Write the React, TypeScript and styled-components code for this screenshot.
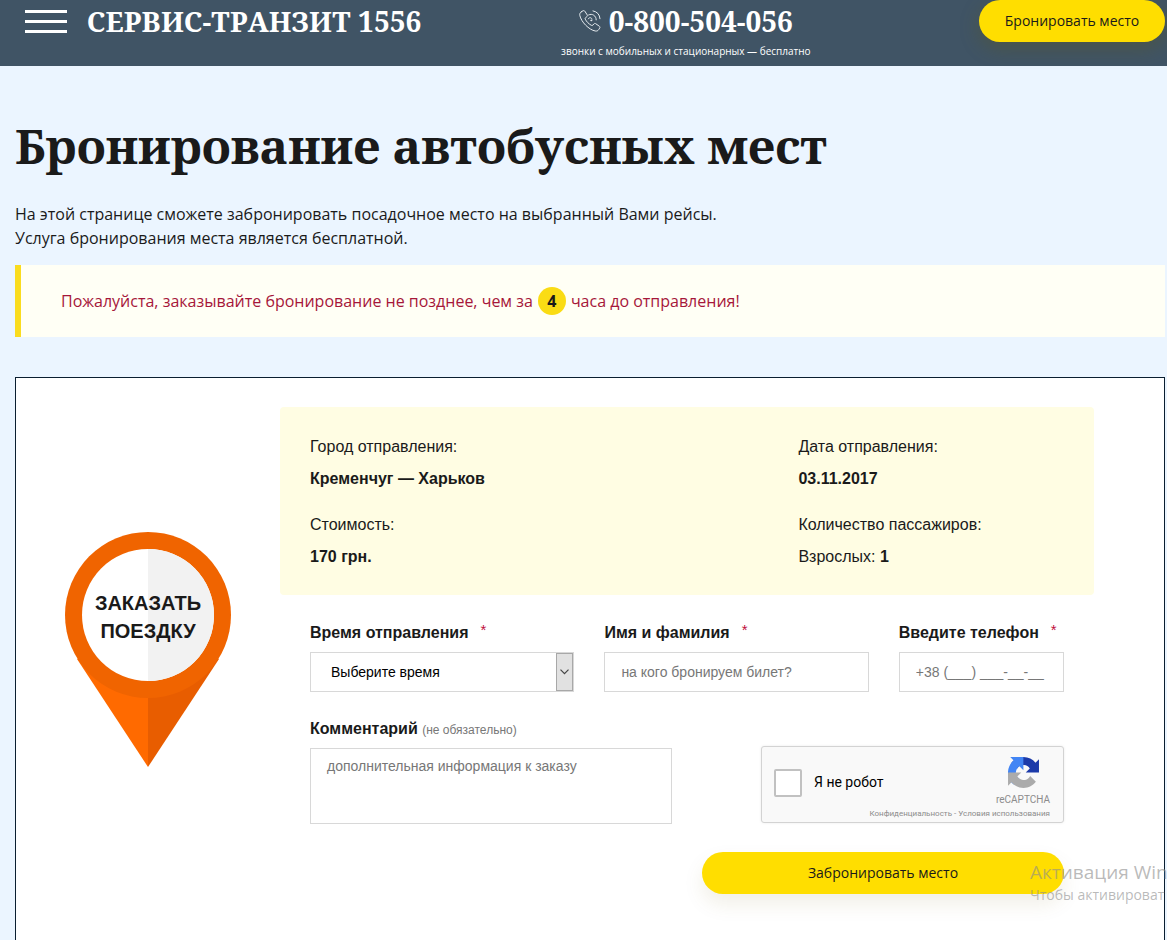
import React from 'react';
import styled, { createGlobalStyle } from 'styled-components';

const serif = `'Noto Serif', 'DejaVu Serif Condensed', 'DejaVu Serif', serif`;
const sans = `'Open Sans', 'Noto Sans', sans-serif`;
const arial = `'Liberation Sans', Arial, sans-serif`;

const GlobalStyle = createGlobalStyle`
  *, *::before, *::after { box-sizing: border-box; }
  body {
    margin: 0;
    background: #ebf5ff;
    color: #1a1a1a;
    font-family: ${sans};
    font-size: 16px;
    line-height: 24px;
  }
`;

const Page = styled.div`
  display: flex;
  flex-direction: column;
  min-height: 100vh;
`;

const Header = styled.header`
  display: grid;
  grid-template-columns: 5fr 4fr 3fr;
  height: 66px;
  padding: 0 2px 0 15px;
  background: #405465;
  color: #fff;
`;

const Brand = styled.div`
  display: flex;
  align-items: flex-start;
  gap: 20px;
  padding-left: 10px;
`;

const MenuButton = styled.button`
  display: flex;
  flex-direction: column;
  gap: 7px;
  width: 42px;
  margin: 10px 0 0;
  padding: 0;
  border: 0;
  background: none;
  cursor: pointer;
`;

const MenuBar = styled.span`
  height: 3px;
  width: 100%;
  background: #fff;
`;

const BrandName = styled.a`
  font: 700 28px/42px ${serif};
  color: #fff;
  text-decoration: none;
  white-space: nowrap;
`;

const Contact = styled.div`
  display: flex;
  flex-direction: column;
  align-items: center;
`;

const Phone = styled.a`
  display: flex;
  align-items: center;
  gap: 8px;
  font: 700 28px/42px ${serif};
  color: #fff;
  text-decoration: none;
  white-space: nowrap;
`;

const PhoneNote = styled.span`
  font-size: 10px;
  line-height: 18px;
  white-space: nowrap;
`;

const PillButton = styled.button<{ $width: number; $shadow?: boolean }>`
  width: ${(p) => p.$width}px;
  height: 42px;
  padding: 0;
  border: 0;
  border-radius: 21px;
  background: #ffde00;
  box-shadow: ${(p) => (p.$shadow ? '0 10px 20px rgba(120, 100, 20, 0.1)' : '0 6px 20px rgba(100, 90, 0, 0.3)')};
  color: #1a1a1a;
  font: 400 14px/42px ${sans};
  cursor: pointer;
`;

const HeaderAction = styled.div`
  display: flex;
  justify-content: flex-end;
`;

const Main = styled.main`
  display: flex;
  flex: 1;
  flex-direction: column;
  padding: 45px 2px 0 15px;
`;

const Title = styled.h1`
  margin: 0 0 21px;
  font: 700 48px/70px ${serif};
`;

const Intro = styled.p`
  margin: 0 0 15px;
`;

const Notice = styled.p`
  display: flex;
  align-items: center;
  gap: 5px;
  min-height: 72px;
  margin: 0 0 40px;
  padding: 0 40px;
  border-left: 6px solid #fadc1e;
  background: #fffff5;
  color: #a6173a;
`;

const Hours = styled.strong`
  width: 28px;
  height: 28px;
  border-radius: 50%;
  background: #fadc14;
  color: #1a1a1a;
  line-height: 28px;
  text-align: center;
`;

const Card = styled.section`
  display: grid;
  flex: 1;
  grid-template-columns: 264px 1fr;
  padding: 29px 70px 46px 0;
  border: 1px solid #0a1e30;
  border-bottom: 0;
  background: #fff;
  font-family: ${arial};
`;

const Aside = styled.aside`
  display: flex;
  justify-content: center;
  align-items: flex-start;
  padding-top: 125px;
`;

const Pin = styled.div`
  display: grid;
  grid-template-areas: 'pin';
  width: 166px;
`;

const PinShape = styled.svg`
  grid-area: pin;
  display: block;
`;

const PinText = styled.strong`
  grid-area: pin;
  z-index: 1;
  padding-top: 57px;
  font-size: 20px;
  line-height: 28px;
  text-align: center;
`;

const Summary = styled.dl`
  display: grid;
  grid-template-columns: 3fr 2fr;
  row-gap: 14px;
  margin: 0;
  padding: 24px 0 22px;
  border-radius: 4px;
  background: #fffde3;
`;

const SummaryItem = styled.div`
  padding-left: 30px;
  line-height: 32px;
`;

const Term = styled.dt``;

const Value = styled.dd`
  margin: 0;
`;

const Form = styled.form`
  padding: 25px 30px 0;
`;

const FieldRow = styled.div`
  display: grid;
  grid-template-columns: 8fr 8fr 5fr;
  column-gap: 30px;
  margin-bottom: 24px;
`;

const Field = styled.div`
  display: flex;
  flex-direction: column;
  gap: 6px;
  min-width: 0;
`;

const Label = styled.label`
  font-weight: 700;
  line-height: 26px;
`;

const Required = styled.span`
  margin-left: 12px;
  color: #c00f3c;
  font-size: 15px;
  font-weight: 400;
  vertical-align: top;
  line-height: 20px;
`;

const Optional = styled.span`
  color: #777;
  font-size: 12px;
  font-weight: 400;
  line-height: 12px;
`;

const Input = styled.input`
  width: 100%;
  height: 40px;
  padding: 0 16px;
  border: 1px solid #d8d8d8;
  border-radius: 0;
  background: #fff;
  font: 400 14px/20px ${arial};
  &::placeholder { color: #777; opacity: 1; }
`;

const SelectWrap = styled.div`
  position: relative;
`;

const Select = styled.select`
  display: block;
  width: 100%;
  height: 40px;
  padding: 0 30px 0 20px;
  border: 1px solid #d8d8d8;
  border-radius: 0;
  background: #fff;
  color: #000;
  font: 400 14px/20px ${arial};
  appearance: none;
`;

const SelectArrow = styled.span`
  position: absolute;
  top: 1px;
  right: 1px;
  bottom: 1px;
  display: flex;
  align-items: center;
  justify-content: center;
  width: 17px;
  border: 1px solid #a8a8a8;
  background: #e1e1e1;
  pointer-events: none;
`;

const LowerRow = styled.div`
  display: flex;
  justify-content: space-between;
  align-items: flex-end;
  margin-bottom: 28px;
`;

const CommentField = styled(Field)`
  width: 48%;
`;

const TextArea = styled.textarea`
  display: block;
  width: 100%;
  height: 76px;
  padding: 7px 16px;
  border: 1px solid #d8d8d8;
  border-radius: 0;
  font: 400 14px/20px ${arial};
  resize: none;
  &::placeholder { color: #777; opacity: 1; }
`;

const Captcha = styled.div`
  display: flex;
  justify-content: space-between;
  width: 303px;
  height: 77px;
  margin-bottom: 1px;
  padding: 0 13px 0 12px;
  border: 1px solid #d3d3d3;
  border-radius: 3px;
  background: #f9f9f9;
  box-shadow: 0 0 3px rgba(0, 0, 0, 0.08);
  white-space: nowrap;
`;

const CaptchaCheck = styled.label`
  display: flex;
  align-items: center;
  gap: 12px;
  width: 0;
  padding-bottom: 4px;
  color: #000;
  font: 400 14px/17px Roboto, sans-serif;
`;

const CheckBox = styled.input`
  flex: none;
  width: 28px;
  height: 28px;
  margin: 0;
  border: 2px solid #c1c1c1;
  border-radius: 2px;
  background: #fff;
  appearance: none;
`;

const CaptchaBrand = styled.div`
  display: flex;
  flex-direction: column;
  align-items: flex-end;
  padding-top: 10px;
  color: #8c8c8c;
  font: 400 10px/14px Roboto, sans-serif;
`;

const CaptchaLogo = styled.svg`
  margin: 0 11px 5px 0;
`;

const CaptchaLinks = styled.div`
  font-size: 8px;
`;

const CaptchaLink = styled.a`
  color: inherit;
  text-decoration: none;
`;

const SubmitRow = styled.div`
  display: flex;
  justify-content: flex-end;
`;

const Watermark = styled.div`
  position: absolute;
  top: 860px;
  right: 0;
  width: 137px;
  overflow: hidden;
  color: rgba(140, 140, 140, 0.6);
  font-family: 'Open Sans', sans-serif;
  font-size: 14px;
  line-height: 22px;
  white-space: nowrap;
  pointer-events: none;
`;

const WatermarkTitle = styled.div`
  font-size: 19px;
  line-height: 24px;
`;

function PhoneIcon() {
  return (
    <svg width="22" height="22" viewBox="0 0 22 22" fill="none" stroke="#e6ebef" strokeWidth="1" strokeLinecap="round" strokeLinejoin="round" aria-hidden="true">
      <path d="M2.2 1.900 4 .8c.7-.4 1.400-.2 1.900.5l2.300 3.600c.4.7.2 1.400-.5 1.900l-1 .7c-.6.5-.7 1-.4 1.700 1 2.200 3.400 4.700 6 6.100.7.400 1.200.3 1.700-.3l.8-1c.5-.6 1.200-.7 1.900-.3l3.600 2.500c.7.5.8 1.200.4 1.900l-1 1.500c-.7 1.200-2 1.700-3.500 1.400C10 19.800 2.200 12 .8 5.400.5 3.900 1 2.700 2.200 1.900Z" />
      <path d="M14 .9a8.600 8.600 0 0 1 7 7.800M9.600 4.900c3.700-1.900 7.700.9 7.600 5M9.300 8.800c.7-1.700 3.300-1.500 3.700.3" />
      <circle cx="12.200" cy="10.400" r=".5" />
    </svg>
  );
}

function RecaptchaIcon() {
  return (
    <CaptchaLogo width="31" height="31" viewBox="0 0 64 64" aria-hidden="true">
      <path fill="#1c3aa9" d="M64 31.955c-.002-.46-.012-.918-.033-1.373V4.640l-7.170 7.170C50.930 4.627 41.998.044 32 .044c-10.405 0-19.650 4.963-25.490 12.650l11.754 11.877a15.570 15.570 0 0 1 4.762-5.343c2.054-1.603 4.964-2.913 8.974-2.913.485 0 .860.056 1.135.163 4.970.393 9.276 3.134 11.812 7.113l-8.320 8.320c10.538-.041 22.443-.066 27.373.044" />
      <path fill="#4285f4" d="M31.862.043c-.46.002-.918.012-1.373.033H4.547l7.170 7.170C4.534 13.113-.049 22.045-.049 32.043c0 10.405 4.963 19.650 12.650 25.490L24.478 45.780a15.570 15.570 0 0 1-5.343-4.762c-1.603-2.054-2.913-4.964-2.913-8.974 0-.485.056-.860.163-1.135.393-4.970 3.134-9.276 7.113-11.812l8.320 8.320c-.041-10.538-.066-22.443.044-27.373" />
      <path fill="#ababab" d="M.044 32.044c.002.460.012.918.033 1.373v25.943l7.170-7.170c5.867 7.183 14.799 11.766 24.797 11.766 10.405 0 19.650-4.963 25.490-12.650L45.780 39.428a15.570 15.570 0 0 1-4.762 5.343c-2.054 1.603-4.964 2.913-8.974 2.913-.485 0-.860-.056-1.135-.163-4.970-.393-9.276-3.134-11.812-7.113l8.320-8.320c-10.538.041-22.443.066-27.373-.044" />
    </CaptchaLogo>
  );
}

const summary = [
  { term: 'Город отправления:', value: <b>Кременчуг — Харьков</b> },
  { term: 'Дата отправления:', value: <b>03.11.2017</b> },
  { term: 'Стоимость:', value: <b>170 грн.</b> },
  { term: 'Количество пассажиров:', value: <>Взрослых: <b>1</b></> },
];

export default function App() {
  return (
    <Page>
      <GlobalStyle />
      <Header>
        <Brand>
          <MenuButton aria-label="Меню">
            <MenuBar />
            <MenuBar />
            <MenuBar />
          </MenuButton>
          <BrandName href="#">СЕРВИС-ТРАНЗИТ 1556</BrandName>
        </Brand>
        <Contact>
          <Phone href="tel:0800504056">
            <PhoneIcon />
            0-800-504-056
          </Phone>
          <PhoneNote>звонки с мобильных и стационарных — бесплатно</PhoneNote>
        </Contact>
        <HeaderAction>
          <PillButton $width={186}>Бронировать место</PillButton>
        </HeaderAction>
      </Header>

      <Main>
        <Title>Бронирование автобусных мест</Title>
        <Intro>
          На этой странице сможете забронировать посадочное место на выбранный Вами рейсы.
          <br />
          Услуга бронирования места является бесплатной.
        </Intro>
        <Notice>
          <span>Пожалуйста, заказывайте бронирование не позднее, чем за</span>
          <Hours>4</Hours>
          <span>часа до отправления!</span>
        </Notice>

        <Card>
          <Aside>
            <Pin>
              <PinShape width="166" height="236" viewBox="0 0 166 236" aria-hidden="true">
                <path fill="#ff6a00" d="M12 127 83 235V83Z" />
                <path fill="#e85d00" d="M154 127 83 235V83Z" />
                <circle cx="83" cy="83" r="83" fill="#f06400" />
                <circle cx="83" cy="83" r="66" fill="#fff" />
                <path fill="#f2f2f2" d="M83 17a66 66 0 0 1 0 132Z" />
              </PinShape>
              <PinText>
                ЗАКАЗАТЬ
                <br />
                ПОЕЗДКУ
              </PinText>
            </Pin>
          </Aside>

          <div>
            <Summary>
              {summary.map((item) => (
                <SummaryItem key={item.term}>
                  <Term>{item.term}</Term>
                  <Value>{item.value}</Value>
                </SummaryItem>
              ))}
            </Summary>

            <Form onSubmit={(e) => e.preventDefault()}>
              <FieldRow>
                <Field>
                  <Label htmlFor="time">
                    Время отправления<Required>*</Required>
                  </Label>
                  <SelectWrap>
                    <Select id="time">
                      <option>Выберите время</option>
                    </Select>
                    <SelectArrow>
                      <svg width="9" height="6" viewBox="0 0 9 6" fill="none" stroke="#444" strokeWidth="1.2" aria-hidden="true">
                        <path d="M.5.7 4.500 4.700 8.500.7" />
                      </svg>
                    </SelectArrow>
                  </SelectWrap>
                </Field>
                <Field>
                  <Label htmlFor="name">
                    Имя и фамилия<Required>*</Required>
                  </Label>
                  <Input id="name" placeholder="на кого бронируем билет?" />
                </Field>
                <Field>
                  <Label htmlFor="phone">
                    Введите телефон<Required>*</Required>
                  </Label>
                  <Input id="phone" type="tel" placeholder="+38 (___) ___-__-__" />
                </Field>
              </FieldRow>

              <LowerRow>
                <CommentField>
                  <Label htmlFor="comment">
                    Комментарий <Optional>(не обязательно)</Optional>
                  </Label>
                  <TextArea id="comment" placeholder="дополнительная информация к заказу" />
                </CommentField>
                <Captcha>
                  <CaptchaCheck>
                    <CheckBox type="checkbox" />
                    Я не робот
                  </CaptchaCheck>
                  <CaptchaBrand>
                    <RecaptchaIcon />
                    <span>reCAPTCHA</span>
                    <CaptchaLinks>
                      <CaptchaLink href="#">Конфиденциальность</CaptchaLink>
                      {' - '}
                      <CaptchaLink href="#">Условия использования</CaptchaLink>
                    </CaptchaLinks>
                  </CaptchaBrand>
                </Captcha>
              </LowerRow>

              <SubmitRow>
                <PillButton type="submit" $width={362} $shadow>
                  Забронировать место
                </PillButton>
              </SubmitRow>
            </Form>
          </div>
        </Card>
      </Main>

      <Watermark>
        <WatermarkTitle>Активация Win</WatermarkTitle>
        Чтобы активироват
      </Watermark>
    </Page>
  );
}
